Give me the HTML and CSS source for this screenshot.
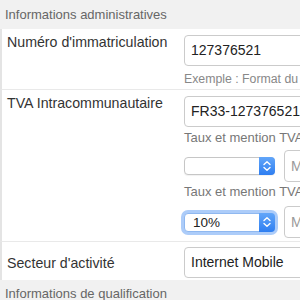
FILE: index.html
```html
<!DOCTYPE html>
<html lang="fr">
<head>
<meta charset="utf-8">
<link rel="stylesheet" href="styles.css">
</head>
<body>
<div class="panel">
  <div class="section-head">Informations administratives</div>

  <div class="row">
    <div class="label">Numéro d'immatriculation</div>
    <div class="field">
      <div class="input">127376521</div>
      <div class="hint">Exemple : Format du numéro SIREN</div>
    </div>
  </div>

  <div class="row row-tva">
    <div class="label">TVA Intracommunautaire</div>
    <div class="field">
      <div class="input">FR33-127376521</div>
      <div class="sublabel first">Taux et mention TVA</div>
      <div class="controls">
        <div class="select">
          <span class="select-text"></span>
          <span class="select-arrow">
            <svg width="16" height="16" viewBox="0 0 16 16"><path d="M5 6.5 L8 3.8 L11 6.5 M5 9.5 L8 12.2 L11 9.5" fill="none" stroke="#fff" stroke-width="1.4" stroke-linecap="round" stroke-linejoin="round"/></svg>
          </span>
        </div>
        <div class="input small">Mention</div>
      </div>
      <div class="sublabel">Taux et mention TVA</div>
      <div class="controls second">
        <div class="select focused">
          <span class="select-text">10%</span>
          <span class="select-arrow">
            <svg width="16" height="16" viewBox="0 0 16 16"><path d="M5 6.5 L8 3.8 L11 6.5 M5 9.5 L8 12.2 L11 9.5" fill="none" stroke="#fff" stroke-width="1.4" stroke-linecap="round" stroke-linejoin="round"/></svg>
          </span>
        </div>
        <div class="input small">Mention</div>
      </div>
    </div>
  </div>

  <div class="row row-last">
    <div class="label">Secteur d'activité</div>
    <div class="field">
      <div class="input">Internet Mobile</div>
    </div>
  </div>

  <div class="section-head second">Informations de qualification</div>
</div>
</body>
</html>
```

FILE: styles.css
```css
html, body {
  margin: 0;
  padding: 0;
  background: #fff;
}
body {
  width: 300px;
  height: 300px;
  overflow: hidden;
  font-family: "Liberation Sans", Arial, sans-serif;
}
.panel {
  width: 460px;
}
.section-head {
  background: #f1f1f1;
  height: 29px;
  line-height: 30px;
  padding-left: 5px;
  font-size: 13px;
  color: #666;
  white-space: nowrap;
}
.section-head.second {
  line-height: 27px;
}
.row {
  display: flex;
  border-left: 2px solid #e4e4e4;
  border-bottom: 1px solid #e9e9e9;
  padding: 6px 0 2px 5px;
}
.label {
  width: 177px;
  flex: none;
  font-size: 14.2px;
  line-height: 18px;
  color: #333;
  margin-top: -2px;
  white-space: nowrap;
}
.row-last {
  align-items: center;
  padding-top: 5px;
  border-bottom: none;
}
.row-last .label {
  margin-top: 0;
}
.field {
  flex: 1;
  min-width: 0;
}
.input {
  height: 29px;
  border: 1px solid #cbcbcb;
  border-radius: 4px;
  font-size: 14px;
  line-height: 29px;
  padding-left: 6px;
  color: #222;
  white-space: nowrap;
}
.hint {
  font-size: 12.3px;
  line-height: 16px;
  color: #888;
  margin-top: 5px;
  white-space: nowrap;
}
.sublabel {
  font-size: 13px;
  line-height: 16px;
  color: #777;
  margin-top: 2px;
  white-space: nowrap;
}
.sublabel.first {
  margin-top: 3px;
}
.controls {
  display: flex;
  align-items: center;
  gap: 9px;
  margin-top: 4px;
}
.controls.second {
  margin-top: 6px;
  margin-bottom: 1px;
}
.controls .input.small {
  flex: 1;
  height: 30px;
  line-height: 30px;
  color: #999;
}
.select {
  flex: none;
  width: 91px;
  height: 18px;
  box-sizing: border-box;
  display: flex;
  border: 1px solid #c6c6c6;
  border-radius: 4px;
  background: #fff;
  box-shadow: 0 1px 1px rgba(0, 0, 0, 0.06);
}
.select-text {
  flex: 1;
  font-size: 13.5px;
  line-height: 16px;
  padding-left: 8px;
  color: #222;
}
.select-arrow {
  flex: none;
  width: 16px;
  margin: -1px -1px -1px 0;
  border-radius: 0 4px 4px 0;
  background: linear-gradient(#62a6f9, #2e7ef1);
  display: flex;
  align-items: center;
  justify-content: center;
}
.select.focused {
  height: 19px;
  border-color: #8fb8f0;
  box-shadow: 0 0 0 3px #acccf9;
}
.select.focused .select-text {
  line-height: 17px;
}
```
